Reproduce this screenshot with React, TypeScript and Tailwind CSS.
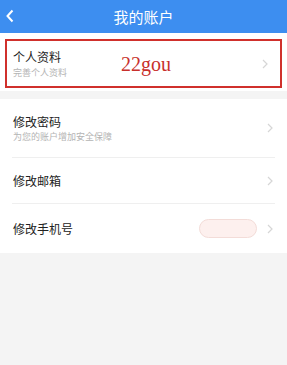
const Chevron = () => (
  <svg width="6" height="10" viewBox="0 0 6 10" className="shrink-0">
    <path d="M1 1l4 4-4 4" fill="none" stroke="#d6d6d6" strokeWidth="1.2" />
  </svg>
)

function Row({ title, sub, children }: { title: string; sub?: string; children?: React.ReactNode }) {
  return (
    <div className="flex items-center h-full pl-[13px] pr-[14px]">
      <div className="flex-1">
        <div className="text-[12px] leading-[14px] text-[#222]">{title}</div>
        {sub && <div className="text-[9px] leading-[11px] mt-[2px] text-[#b4b4b4]">{sub}</div>}
      </div>
      {children}
      <Chevron />
    </div>
  )
}

export default function App() {
  return (
    <div
      className="w-[287px] h-[365px] bg-[#f4f4f4] overflow-hidden"
      style={{ fontFamily: '"Noto Sans CJK SC", "Noto Sans", sans-serif' }}
    >
      <header className="relative h-[33px] bg-[#3d8ef0] flex items-center justify-center">
        <svg width="10" height="14" viewBox="0 0 10 14" className="absolute left-[5px] top-[9px]">
          <path d="M7.5 1.5L2.5 7l5 5.5" fill="none" stroke="#fff" strokeWidth="2" />
        </svg>
        <span className="text-white text-[15px] leading-[20px]">我的账户</span>
      </header>

      <div className="bg-white pt-[6px] pb-[3px] px-[5px]">
        <div className="border-2 border-[#d0302c] h-[49px] flex items-center pl-[6px] pr-[12px]">
          <div className="w-[108px]">
            <div className="text-[12px] leading-[14px] text-[#222]">个人资料</div>
            <div className="text-[9px] leading-[11px] mt-[3px] text-[#b4b4b4]">完善个人资料</div>
          </div>
          <div
            className="flex-1 text-[20px] text-[#c8302c]"
            style={{ fontFamily: '"Liberation Serif", serif' }}
          >
            22gou
          </div>
          <Chevron />
        </div>
      </div>

      <div className="bg-white mt-[8px]">
        <div className="h-[58px]">
          <Row title="修改密码" sub="为您的账户增加安全保障" />
        </div>
        <div className="mx-[12px] h-px bg-[#efefef]" />
        <div className="h-[45px]">
          <Row title="修改邮箱" />
        </div>
        <div className="mx-[12px] h-px bg-[#efefef]" />
        <div className="h-[49px]">
          <Row title="修改手机号">
            <div className="w-[58px] h-[19px] rounded-full bg-[#fdf0ee] border border-[#f3dcd8] mr-[10px]" />
          </Row>
        </div>
      </div>
    </div>
  )
}
